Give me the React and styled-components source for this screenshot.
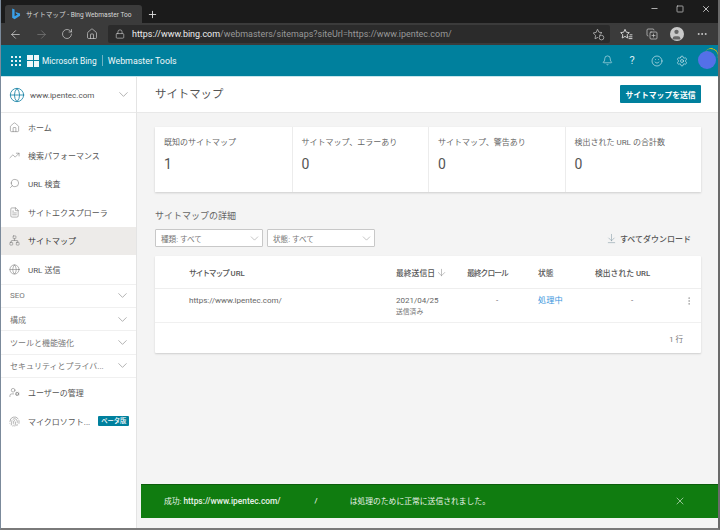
import React from 'react';
import styled, { createGlobalStyle } from 'styled-components';
import { ArrowLeft, ArrowRight, RotateCw, Home, Lock, X, Plus, Minus, Square, MoreHorizontal, Bell, Smile, Settings, ChevronDown, TrendingUp, Search, FileText, Network, Globe, ArrowDown, MoreVertical, UserCog, Fingerprint, ArrowDownToLine, CopyPlus, User } from 'lucide-react';

const Global = createGlobalStyle`
  html, body { margin: 0; padding: 0; }
  body { font-family: Roboto, "Noto Sans CJK JP", sans-serif; }
  * { box-sizing: border-box; }
`;
const Page = styled.div`
  width: 720px; height: 530px; display: flex; flex-direction: column; overflow: hidden;
  background: #fff; border-right: 2px solid #6a6a6a; border-bottom: 2px solid #7a7a7a; border-left: 1px solid #7b8a9b;
`;
const TitleBar = styled.div`
  height: 23px; flex: none; background: #1b1b1b; display: flex; align-items: flex-end; padding-left: 4px; color: #ddd; margin-left: -1px;
`;
const Tab = styled.div`
  width: 137px; height: 18px; margin-left: 1px; background: #3b3b3b; border-radius: 3px 3px 0 0; display: flex; align-items: center; padding: 0 5px 0 6px; gap: 5px; font-size: 6.6px; color: #d8d8d8; white-space: nowrap;
`;
const TabTitle = styled.span` flex: 1; `;
const NewTab = styled.div` display: flex; align-items: center; height: 18px; margin-left: 5px; `;
const WindowButtons = styled.div` margin-left: auto; height: 23px; display: flex; align-items: center; gap: 17px; padding-right: 7px; transform: translateY(-3px); `;
const Toolbar = styled.div`
  height: 22px; flex: none; background: #3b3b3b; display: flex; align-items: center; padding-left: 9px; color: #cfcfcf; margin-left: -1px;
`;
const ToolIcon = styled.div` width: ${p => p.$first ? 20 : 25}px; margin-left: ${p => p.$gap || 0}px; display: flex; justify-content: ${p => p.$first ? 'flex-start' : 'center'}; color: ${p => p.$dim ? '#777' : '#cfcfcf'}; flex: none; `;
const Address = styled.div`
  width: 502px; height: 18px; margin-left: 4px; background: #2b2b2b; border-radius: 2px; display: flex; align-items: center; padding: 0 5px 0 7px; font-size: 8.95px; color: #999; white-space: nowrap; gap: 7px; flex: none;
  b { font-weight: 400; color: #eee; }
`;
const AddressText = styled.span` flex: 1; `;
const Avatar = styled.div` width: 14px; height: 14px; border-radius: 50%; background: #c9c9c9; color: #666; display: flex; justify-content: center; align-items: flex-end; overflow: hidden; `;
const Header = styled.header`
  height: 31px; flex: none; background: #00809d; display: flex; align-items: center; color: #fff; padding: 0 2px 0 11px; margin-left: -1px;
`;
const Waffle = styled.div` display: grid; grid-template-columns: repeat(3, 2px); gap: 2px; margin-right: 6px; span { width: 2px; height: 2px; background: #e5f2f5; } `;
const MsLogo = styled.div` display: grid; grid-template-columns: 5.5px 5.5px; gap: 1px; margin-right: 3px; span { width: 5.5px; height: 5.5px; background: #eef7f9; } `;
const Brand = styled.span` font-size: ${p => p.$size}px; white-space: nowrap; color: #f0f8fa; `;
const Divider = styled.span` width: 1px; height: 11px; background: #6fb3c3; margin: 0 5px; `;
const HeaderIcons = styled.div` margin-left: auto; display: flex; align-items: center; color: #d7edf2; `;
const IconSlot = styled.span` width: 25px; display: flex; justify-content: center; font-size: 11px; line-height: 12px; `;
const Profile = styled.div` width: 18px; height: 18px; border-radius: 50%; background: #5470e8; position: relative; margin-left: 3.5px; transform: translateY(-1px);
  &::after { content: ""; position: absolute; top: -3px; right: -2px; width: 14px; height: 14px; border-radius: 50%; border-top: 1.5px solid #e5c100; transform: rotate(24deg); }
`;
const Body = styled.div` flex: 1; min-height: 0; display: flex; border-top: 1px solid #c7e6ec; `;
const Sidebar = styled.nav` width: 136px; flex: none; background: #fff; display: flex; flex-direction: column; border-right: 1px solid #e4e4e4; color: #555; `;
const SiteRow = styled.div`
  height: 36px; flex: none; display: flex; align-items: center; padding: 0 5px 0 8px; font-size: 8.1px; border-bottom: 1px solid #e9e9e9; color: #555;
`;
const SiteName = styled.span` margin-left: 5px; flex: 1; `;
const NavItem = styled.div`
  height: 28.4px; display: flex; align-items: center; padding-left: 8px; gap: 8px; font-size: 8px; color: ${p => p.$active ? '#333' : '#555'}; background: ${p => p.$active ? '#edebe9' : 'transparent'}; white-space: nowrap;
  svg { flex: none; color: #777; }
`;
const Badge = styled.span` background: #00809d; color: #fff; font-size: 6.3px; height: 10px; line-height: 10px; padding: 0 3px; border-radius: 1px; white-space: nowrap; font-weight: 500; `;
const Section = styled.div`
  height: 23.3px; display: flex; align-items: center; justify-content: space-between; padding: 0 6px 0 9px; font-size: 8px; color: #777; border-top: 1px solid #f0f0f0; white-space: nowrap;
  svg { color: #777; flex: none; }
`;
const SectionList = styled.div` margin-top: 0.5px; border-bottom: 1px solid #f0f0f0; margin-bottom: 0.5px; `;
const FlippedSearch = styled(Search)` transform: scaleX(-1); `;
const Main = styled.main` flex: 1; min-width: 0; background: #f4f4f4; display: flex; flex-direction: column; `;
const PageHead = styled.div` height: 36px; flex: none; background: #fff; border-bottom: 1px solid #e8e8e8; display: flex; align-items: center; justify-content: space-between; padding: 0 17px 1px 18px; `;
const Title = styled.h1` margin: 0 0 3px; font-size: 11.4px; font-weight: 400; color: #555; `;
const Primary = styled.button` width: 81px; height: 18px; border: 0; border-radius: 1px; background: #00809d; color: #fff; font: 600 7.8px Roboto, "Noto Sans CJK JP", sans-serif; padding: 0; `;
const Content = styled.div` padding: 14px 17px 0 18px; flex: 1; display: flex; flex-direction: column; min-height: 0; `;
const Cards = styled.section` height: 65px; flex: none; display: grid; grid-template-columns: repeat(4, 1fr); background: #fff; box-shadow: 0 1px 2px rgba(0,0,0,.16); `;
const Card = styled.div` padding: 10px 9px 0 9px; border-left: ${p => p.$first ? '0' : '1px solid #ececec'}; color: #666; font-size: 8px; line-height: 12px; white-space: nowrap; `;
const CardValue = styled.div` font-size: 14px; line-height: 18px; margin-top: 6px; color: #555; `;
const SubTitle = styled.h2` margin: 17px 0 0; font-size: 9px; font-weight: 400; color: #666; line-height: 14px; `;
const Filters = styled.div` display: flex; align-items: center; gap: 4px; margin-top: 6px; height: 18px; flex: none; `;
const Select = styled.div` width: 108px; height: 18px; background: #fff; border: 1px solid #c8c8c8; border-radius: 1px; display: flex; align-items: center; justify-content: space-between; padding: 0 1px 0 5px; font-size: 7.6px; color: #777; svg { color: #888; } `;
const DownloadAll = styled.div` margin-left: auto; margin-right: 10px; display: flex; align-items: center; gap: 3px; font-size: 8px; font-weight: 500; color: #555; svg { color: #78909c; } `;
const Table = styled.section` margin-top: 9px; height: 97px; flex: none; background: #fff; box-shadow: 0 1px 2px rgba(0,0,0,.16); border-radius: 1px; display: flex; flex-direction: column; `;
const Row = styled.div` display: grid; grid-template-columns: 34px 207px 71px 71px 57px 89px 1fr; `;
const HeadRow = styled(Row)` height: 33px; align-items: center; border-bottom: 1px solid #eee; font-size: 7.8px; font-weight: 500; color: #555; white-space: nowrap; `;
const TightHead = styled.span` letter-spacing: -${p => p.$by}px; `;
const DataRow = styled(Row)` height: 34px; padding-top: 5px; border-bottom: 1px solid #f0f0f0; font-size: 8px; color: #666; white-space: nowrap; line-height: 13px; `;
const Muted = styled.div` font-size: 6.8px; color: #777; line-height: 10px; `;
const Centered = styled.div` padding-left: ${p => p.$pad}px; `;
const StatusLink = styled.div` color: #3a96dd; font-size: 8.2px; `;
const SortHead = styled.div` display: flex; align-items: center; svg { color: #777; margin-left: 1px; } `;
const Kebab = styled.div` display: flex; justify-content: flex-start; color: #888; padding-top: 2px; `;
const Footer = styled.div` flex: 1; display: flex; align-items: center; justify-content: flex-end; padding: 0 18px 0 0; font-size: 7.6px; color: #777; `;
const Toast = styled.div`
  margin: auto -17px 10px -14px; height: 34px; flex: none; background: #107c10; color: #e9f3e9; display: flex; align-items: center; padding: 0 32px 2px 23px; font-size: 7.8px; white-space: nowrap;
  border-top: 1px solid #0c5d0c;
`;
const ToastUrl = styled.span` font-weight: 500; font-size: 8.4px; `;
const ToastSlash = styled.span` margin-left: 34px; font-weight: 500; `;
const ToastText = styled.span` margin-left: 32px; flex: 1; `;

const BingMark = () => (
  <svg width="10" height="12" viewBox="0 0 9 11" style={{ flex: 'none' }}>
    <path d="M1 0.5 L3.2 1.3 V7.6 L6 6 L4.7 5.3 L4 3.6 L8.2 5 V7 L3.2 10.4 L1 9 Z" fill="#3aa0e8" />
  </svg>
);
const StarAdd = () => (
  <svg width="13" height="13" viewBox="0 0 13 13" fill="none" stroke="#aaa" strokeWidth="0.9">
    <path d="M5.5 1.2 L6.9 4.2 L10 4.6 L7.7 6.8 L8 8" />
    <path d="M6 9.3 L3 10.8 L3.6 7.4 L1.2 5 L4.2 4.4 L5.5 1.2" />
    <circle cx="9.5" cy="9.6" r="2.3" />
  </svg>
);
const StarList = () => (
  <svg width="13" height="13" viewBox="0 0 13 13" fill="none" stroke="#cfcfcf" strokeWidth="1">
    <path d="M5 1.3 L6.3 4.2 L9.3 4.6 L7.1 6.7 L7.7 10 L5 8.4 L2.2 10 L2.8 6.7 L0.7 4.6 L3.7 4.2 Z" />
    <path d="M9.6 6.8 H12.4 M8.6 8.8 H12.4 M8.6 10.6 H12.4" />
  </svg>
);
const nav = [
  [Home, 'ホーム'], [TrendingUp, '検索パフォーマンス'], [FlippedSearch, 'URL 検査'], [FileText, 'サイトエクスプローラ'], [Network, 'サイトマップ', true], [Globe, 'URL 送信'],
];
const sections = ['SEO', '構成', 'ツールと機能強化', 'セキュリティとプライバ...'];
const cards = [['既知のサイトマップ', 1], ['サイトマップ、エラーあり', 0], ['サイトマップ、警告あり', 0], ['検出された URL の合計数', 0]];

export default function App() {
  return (
    <Page>
      <Global />
      <TitleBar>
        <Tab><BingMark /><TabTitle>サイトマップ - Bing Webmaster Too</TabTitle><X size={9} /></Tab>
        <NewTab><Plus size={11} /></NewTab>
        <WindowButtons><Minus size={9} /><Square size={8} /><X size={10} /></WindowButtons>
      </TitleBar>
      <Toolbar>
        <ToolIcon $first><ArrowLeft size={13} strokeWidth={1.4} /></ToolIcon>
        <ToolIcon $dim><ArrowRight size={13} strokeWidth={1.4} /></ToolIcon>
        <ToolIcon><RotateCw size={12} strokeWidth={1.4} /></ToolIcon>
        <ToolIcon><Home size={12} strokeWidth={1.4} /></ToolIcon>
        <Address>
          <Lock size={10} strokeWidth={1.5} color="#ccc" />
          <AddressText><b>https://www.bing.com</b>/webmasters/sitemaps?siteUrl=https://www.ipentec.com/</AddressText>
          <StarAdd />
        </Address>
        <ToolIcon $gap={4}><StarList /></ToolIcon>
        <ToolIcon><CopyPlus size={12} strokeWidth={1.4} /></ToolIcon>
        <ToolIcon><Avatar><User size={13} fill="#666" strokeWidth={0} /></Avatar></ToolIcon>
        <ToolIcon><MoreHorizontal size={12} /></ToolIcon>
      </Toolbar>
      <Header>
        <Waffle>{Array.from({ length: 9 }, (_, i) => <span key={i} />)}</Waffle>
        <MsLogo><span /><span /><span /><span /></MsLogo>
        <Brand $size={8.4}>Microsoft Bing</Brand>
        <Divider />
        <Brand $size={8.9}>Webmaster Tools</Brand>
        <HeaderIcons>
          <IconSlot><Bell size={11} strokeWidth={1.3} /></IconSlot>
          <IconSlot>?</IconSlot>
          <IconSlot><Smile size={12} strokeWidth={1.3} /></IconSlot>
          <IconSlot><Settings size={12} strokeWidth={1.3} /></IconSlot>
          <Profile />
        </HeaderIcons>
      </Header>
      <Body>
        <Sidebar>
          <SiteRow>
            <Globe size={16} strokeWidth={1.3} color="#1f87a8" />
            <SiteName>www.ipentec.com</SiteName>
            <ChevronDown size={15} strokeWidth={0.9} color="#777" />
          </SiteRow>
          {nav.map(([Icon, label, active]) => (
            <NavItem key={label} $active={active}><Icon size={11} strokeWidth={1.2} />{label}</NavItem>
          ))}
          <SectionList>
            {sections.map(s => <Section key={s}>{s}<ChevronDown size={15} strokeWidth={0.9} /></Section>)}
          </SectionList>
          <NavItem><UserCog size={11} strokeWidth={1.2} />ユーザーの管理</NavItem>
          <NavItem><Fingerprint size={11} strokeWidth={1.2} />マイクロソフト...<Badge>ベータ版</Badge></NavItem>
        </Sidebar>
        <Main>
          <PageHead><Title>サイトマップ</Title><Primary>サイトマップを送信</Primary></PageHead>
          <Content>
            <Cards>
              {cards.map(([label, value], i) => (
                <Card key={label} $first={i === 0}>{label}<CardValue>{value}</CardValue></Card>
              ))}
            </Cards>
            <SubTitle>サイトマップの詳細</SubTitle>
            <Filters>
              <Select>種類: すべて<ChevronDown size={13} strokeWidth={0.9} /></Select>
              <Select>状態: すべて<ChevronDown size={13} strokeWidth={0.9} /></Select>
              <DownloadAll><ArrowDownToLine size={11} strokeWidth={1.1} />すべてダウンロード</DownloadAll>
            </Filters>
            <Table>
              <HeadRow>
                <span /><span><TightHead $by={1.2}>サイトマップ</TightHead> URL</span>
                <SortHead>最終送信日<ArrowDown size={11} strokeWidth={1} /></SortHead>
                <TightHead $by={1}>最終クロール</TightHead><span>状態</span><span>検出された URL</span><span />
              </HeadRow>
              <DataRow>
                <span /><span>https://www.ipentec.com/</span>
                <div>2021/04/25<Muted>送信済み</Muted></div>
                <Centered $pad={29}>-</Centered>
                <StatusLink>処理中</StatusLink>
                <Centered $pad={36}>-</Centered>
                <Kebab><MoreVertical size={10} strokeWidth={1.3} /></Kebab>
              </DataRow>
              <Footer>1 行</Footer>
            </Table>
            <Toast>
              <span>成功:&nbsp;</span><ToastUrl>https://www.ipentec.com/</ToastUrl>
              <ToastSlash>/</ToastSlash>
              <ToastText>は処理のために正常に送信されました。</ToastText>
              <X size={12} strokeWidth={1.2} />
            </Toast>
          </Content>
        </Main>
      </Body>
    </Page>
  );
}
